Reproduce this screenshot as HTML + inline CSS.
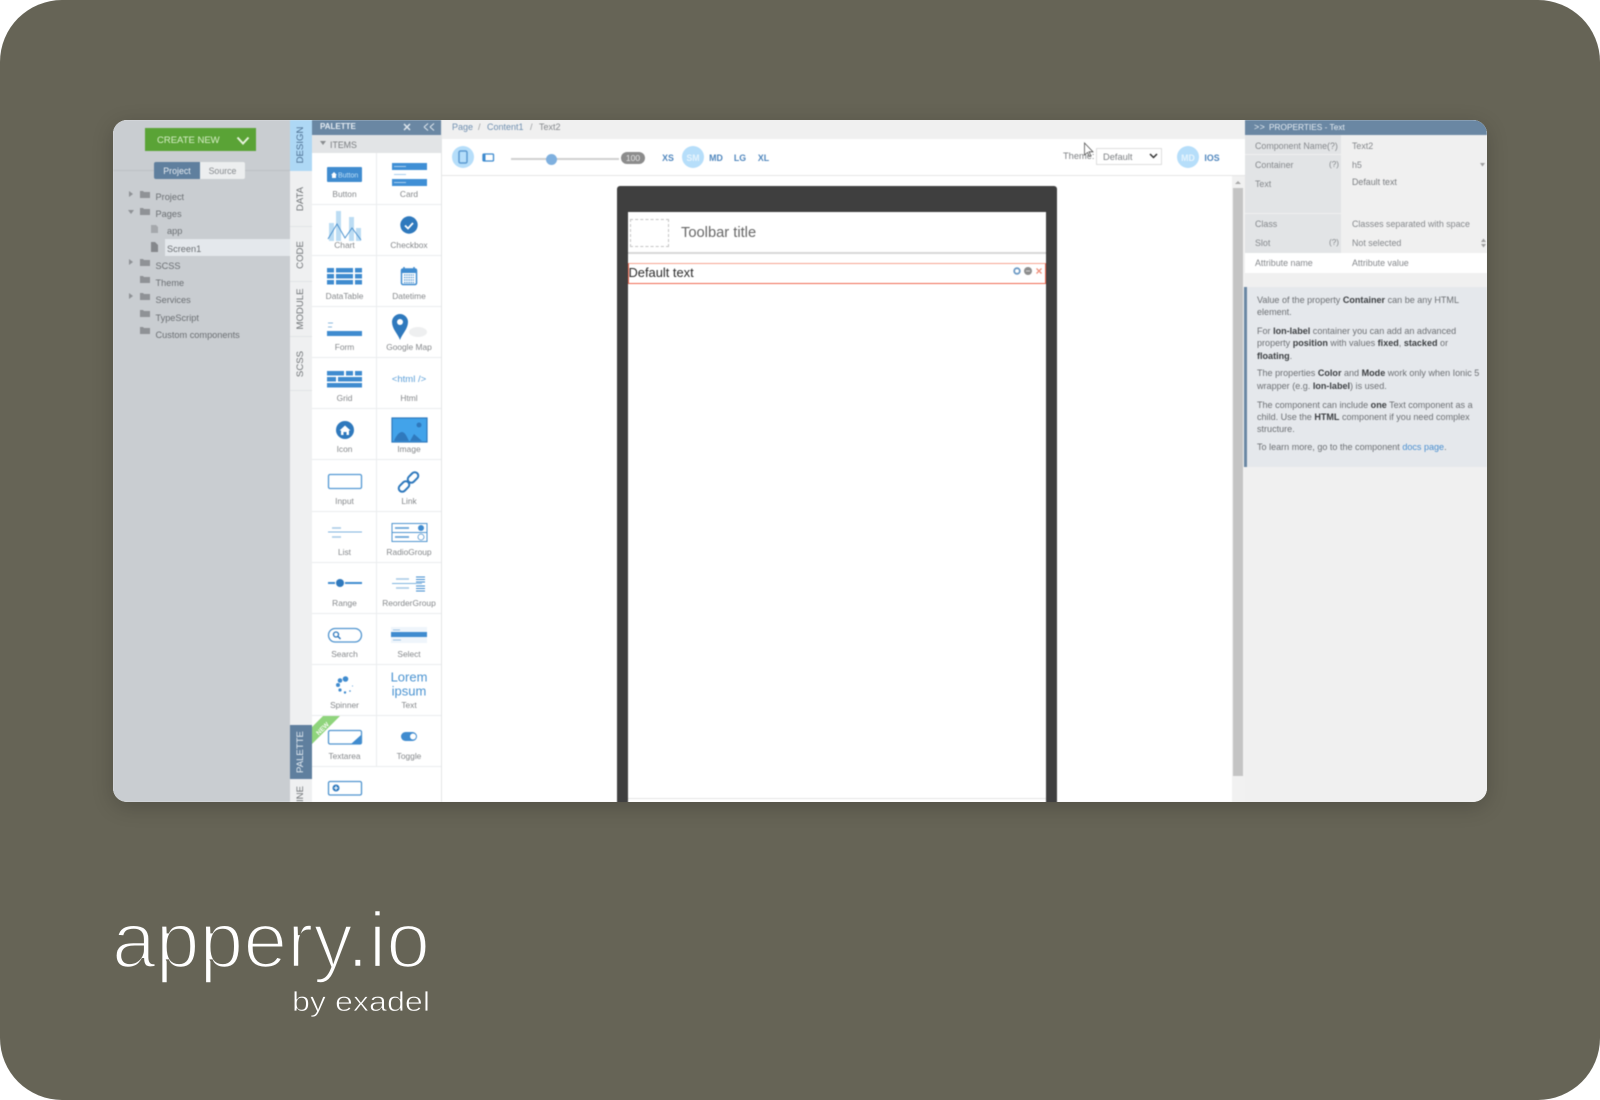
<!DOCTYPE html>
<html lang="en"><head><meta charset="utf-8"><title>appery.io</title>
<style>
html,body{margin:0;padding:0;width:1600px;height:1100px;background:#fff;overflow:hidden}
#bg{position:absolute;left:0;top:0;width:1600px;height:1100px;background:#666456;border-radius:62px;overflow:hidden}
.card{position:absolute;left:113px;top:120px;width:1374px;height:682px;border-radius:14px;overflow:hidden;background:#f0f0f0}
#in{position:absolute;left:-113px;top:-120px;width:1600px;height:1100px;filter:blur(.5px);font-family:"Liberation Sans",sans-serif}
#in div,#in svg{position:absolute}
.t{white-space:nowrap;line-height:12px;height:12px;font-size:9.2px;color:#6b6f73}
.c{text-align:center}
.pl{width:64px;text-align:center;white-space:nowrap;line-height:12px;height:12px;font-size:8.4px;color:#85888b}
.vt{white-space:nowrap;font-size:9.6px;color:#6e7275;line-height:12px;transform:rotate(-90deg);transform-origin:center;width:60px;height:12px;text-align:center}
.sz{font-weight:bold;font-size:9px;color:#4f86bd;line-height:12px;height:12px;width:24px;text-align:center}
.h{font-size:9.05px;color:#6d7074;white-space:nowrap;line-height:12px;height:12px}
.h b{color:#3c3f42}
</style></head><body>
<div id="bg">
<div class="card" style="box-shadow:0 5px 22px rgba(0,0,0,.2)"></div>
</div>
<div class="card">
<div id="in">
<!-- left -->
<div style="left:113px;top:120px;width:177px;height:682px;background:#c9cdd1"></div>
<div style="left:113px;top:170px;width:177px;height:1px;background:#bdc1c5"></div>
<div style="left:145px;top:128px;width:111px;height:23px;background:#5aa336"></div>
<div class="t" style="left:157px;top:133.500px;color:#d8efc8;font-size:9.500px;line-height:14px;height:14px">CREATE NEW</div>
<svg style="left:236px;top:135px" width="14" height="11" viewBox="0 0 14 11"><path d="M1.5 2.5 7 8.500 12.500 2.500" fill="none" stroke="#e6f3dc" stroke-width="2"/></svg>
<div style="left:154px;top:162px;width:46px;height:17px;background:#5f7f9e;border-radius:2px 0 0 2px"></div>
<div style="left:200px;top:162px;width:45px;height:17px;background:#eceeef;border-radius:0 2px 2px 0"></div>
<div class="t c" style="left:154px;top:164.500px;width:46px;color:#e8edf2;font-size:8.800px">Project</div>
<div class="t c" style="left:200px;top:164.500px;width:45px;color:#85898d;font-size:8.800px">Source</div>
<div style="left:165px;top:239px;width:125px;height:17px;background:#e4e8ec"></div>
<svg style="left:126px;top:186px" width="30" height="160" viewBox="0 0 30 160" fill="#8f9296">
<path d="M3 5l4 3-4 3z M3 73l4 3-4 3z M3 107l4 3-4 3z M2 24l6 0-3 4z"/>
<path d="M14 5h3l1 1h6v6h-10z M14 22h3l1 1h6v6h-10z M14 73h3l1 1h6v6h-10z M14 90h3l1 1h6v6h-10z M14 107h3l1 1h6v6h-10z M14 124h3l1 1h6v6h-10z M14 141h3l1 1h6v6h-10z"/>
</svg>
<svg style="left:150px;top:224px" width="10" height="30" viewBox="0 0 10 30" fill="#a5a8ac"><path d="M1 1h5l2 2v6h-7z"/><path d="M1 18h4l3 3v7h-7z" fill="#85888c"/></svg>
<div class="t" style="left:155.500px;top:190.500px">Project</div>
<div class="t" style="left:155.500px;top:207.500px">Pages</div>
<div class="t" style="left:167px;top:224.500px">app</div>
<div class="t" style="left:167px;top:242.500px">Screen1</div>
<div class="t" style="left:155.500px;top:259.500px">SCSS</div>
<div class="t" style="left:155.500px;top:276.500px">Theme</div>
<div class="t" style="left:155.500px;top:293.500px">Services</div>
<div class="t" style="left:155.500px;top:311.500px">TypeScript</div>
<div class="t" style="left:155.500px;top:328.500px">Custom components</div>
<!-- vertical tabs -->
<div style="left:290px;top:120px;width:22px;height:682px;background:#eff0f1"></div>
<div style="left:290px;top:120px;width:22px;height:51px;background:#aed8f5"></div>
<div style="left:290px;top:226px;width:22px;height:1px;background:#e2e4e6"></div>
<div style="left:290px;top:281px;width:22px;height:1px;background:#e2e4e6"></div>
<div style="left:290px;top:336px;width:22px;height:1px;background:#e2e4e6"></div>
<div style="left:290px;top:390px;width:22px;height:1px;background:#e2e4e6"></div>
<div class="vt" style="left:271px;top:139px;color:#4c6f92">DESIGN</div>
<div class="vt" style="left:271px;top:193px">DATA</div>
<div class="vt" style="left:271px;top:249px">CODE</div>
<div class="vt" style="left:271px;top:303px">MODULE</div>
<div class="vt" style="left:271px;top:358px">SCSS</div>
<div style="left:290px;top:725px;width:22px;height:54px;background:#5f7f9e"></div>
<div class="vt" style="left:271px;top:746px;color:#e6edf3">PALETTE</div>
<div class="vt" style="left:271px;top:810px;text-align:right">LINE</div>
<!-- palette -->
<div style="left:312px;top:120px;width:129px;height:682px;background:#fff"></div>
<div style="left:312px;top:120px;width:129px;height:15px;background:#6a87a3"></div>
<div class="t" style="left:320px;top:120.500px;color:#e6edf3;font-size:8px;font-weight:bold">PALETTE</div>
<svg style="left:402px;top:122px" width="34" height="11" viewBox="0 0 34 11" fill="none" stroke="#dfe7ee"><path d="M2 2l6 6M8 2l-6 6" stroke-width="1.500"/><path d="M22 5l4-3.500M22 5l4 3.500M28 5l4-3.500M28 5l4 3.500" stroke-width="1"/></svg>
<div style="left:312px;top:135px;width:129px;height:18px;background:#e2e4e6"></div>
<svg style="left:320px;top:141px" width="7" height="5"><path d="M0 0h6l-3 4z" fill="#8a8d90"/></svg>
<div class="t" style="left:330px;top:139px;font-size:8.800px;color:#7a7d80">ITEMS</div>
<div style="left:376px;top:153px;width:1px;height:613px;background:#ebedee"></div>
<div style="left:441px;top:120px;width:1px;height:682px;background:#e3e5e6"></div>
<div style="left:312px;top:204px;width:129px;height:1px;background:#ebedee"></div>
<div style="left:312px;top:255px;width:129px;height:1px;background:#ebedee"></div>
<div style="left:312px;top:306px;width:129px;height:1px;background:#ebedee"></div>
<div style="left:312px;top:357px;width:129px;height:1px;background:#ebedee"></div>
<div style="left:312px;top:408px;width:129px;height:1px;background:#ebedee"></div>
<div style="left:312px;top:459px;width:129px;height:1px;background:#ebedee"></div>
<div style="left:312px;top:511px;width:129px;height:1px;background:#ebedee"></div>
<div style="left:312px;top:562px;width:129px;height:1px;background:#ebedee"></div>
<div style="left:312px;top:613px;width:129px;height:1px;background:#ebedee"></div>
<div style="left:312px;top:664px;width:129px;height:1px;background:#ebedee"></div>
<div style="left:312px;top:715px;width:129px;height:1px;background:#ebedee"></div>
<div style="left:312px;top:766px;width:129px;height:1px;background:#ebedee"></div>
<div class="pl" style="left:312.500px;top:187.500px">Button</div><div class="pl" style="left:377px;top:187.500px">Card</div>
<div class="pl" style="left:312.500px;top:238.500px">Chart</div><div class="pl" style="left:377px;top:238.500px">Checkbox</div>
<div class="pl" style="left:312.500px;top:289.500px">DataTable</div><div class="pl" style="left:377px;top:289.500px">Datetime</div>
<div class="pl" style="left:312.500px;top:340.500px">Form</div><div class="pl" style="left:377px;top:340.500px">Google Map</div>
<div class="pl" style="left:312.500px;top:391.500px">Grid</div><div class="pl" style="left:377px;top:391.500px">Html</div>
<div class="pl" style="left:312.500px;top:442.500px">Icon</div><div class="pl" style="left:377px;top:442.500px">Image</div>
<div class="pl" style="left:312.500px;top:494.500px">Input</div><div class="pl" style="left:377px;top:494.500px">Link</div>
<div class="pl" style="left:312.500px;top:545.500px">List</div><div class="pl" style="left:377px;top:545.500px">RadioGroup</div>
<div class="pl" style="left:312.500px;top:596.500px">Range</div><div class="pl" style="left:377px;top:596.500px">ReorderGroup</div>
<div class="pl" style="left:312.500px;top:647.500px">Search</div><div class="pl" style="left:377px;top:647.500px">Select</div>
<div class="pl" style="left:312.500px;top:698.500px">Spinner</div><div class="pl" style="left:377px;top:698.500px">Text</div>
<div class="pl" style="left:312.500px;top:749.500px">Textarea</div><div class="pl" style="left:377px;top:749.500px">Toggle</div>
<svg style="left:312px;top:153px" width="129" height="649" viewBox="312 153 129 649">
<!-- button -->
<rect x="327" y="167" width="35" height="15" rx="1" fill="#3f8bcf"/>
<path d="M331 175l3-3 3 3h-1v3h-4v-3z" fill="#fff"/>
<text x="338" y="177.500" font-size="7" fill="#bfe0f7" font-family="Liberation Sans">Button</text>
<!-- card -->
<rect x="392" y="163" width="35" height="23" fill="#3f8fd5"/><rect x="392" y="170" width="35" height="9" fill="#fff"/>
<path d="M394 166.500h12M394 174.500h12M394 182.500h12" stroke="#a9cfee" stroke-width="1"/>
<!-- chart -->
<g fill="#bcdcf3"><rect x="329" y="223" width="5" height="18"/><rect x="336" y="211" width="5" height="30"/><rect x="349" y="217" width="5" height="24"/><rect x="356" y="228" width="5" height="13"/></g>
<path d="M328 239l9-15 8 14 7-10 9 12" fill="none" stroke="#4f94cf" stroke-width="1"/>
<!-- checkbox -->
<circle cx="409" cy="225" r="8.700" fill="#2f79bd"/><path d="M405 225.500l3 3 5-5.500" fill="none" stroke="#fff" stroke-width="1.800"/>
<!-- datatable -->
<g fill="#3f8bcf"><rect x="327" y="268" width="7" height="4.500"/><rect x="336" y="268" width="17" height="4.500"/><rect x="355" y="268" width="7" height="4.500"/><rect x="327" y="274" width="7" height="4.500"/><rect x="336" y="274" width="17" height="4.500"/><rect x="355" y="274" width="7" height="4.500"/><rect x="327" y="280" width="7" height="4.500"/><rect x="336" y="280" width="17" height="4.500"/><rect x="355" y="280" width="7" height="4.500"/></g>
<!-- datetime -->
<rect x="401.500" y="269" width="15" height="15.500" rx="1.500" fill="#fff" stroke="#3f8bcf" stroke-width="1.500"/><rect x="401" y="269" width="16" height="4" fill="#3f8bcf"/><path d="M404 267v3M414 267v3" stroke="#3f8bcf" stroke-width="1.500"/>
<path d="M404 275h10M404 277.500h10M404 280h10M404 282.500h10" stroke="#5a9bd4" stroke-width="1.200" stroke-dasharray="1.500 .7"/>
<!-- form -->
<rect x="327" y="331" width="35" height="5" fill="#3f8bcf"/><path d="M328 323h5M328 327h4" stroke="#8db9de"/>
<!-- map -->
<ellipse cx="418" cy="332" rx="9" ry="5" fill="#eeeff0"/>
<path d="M400 340c-2-6-8-11-8-18a8 8 0 0 1 16 0c0 7-6 12-8 18z" fill="#2f79bd"/><circle cx="400" cy="322" r="3" fill="#fff"/>
<!-- grid -->
<g fill="#3f8bcf"><rect x="327" y="371" width="17" height="4.500"/><rect x="346" y="371" width="7" height="4.500"/><rect x="355" y="371" width="7" height="4.500"/><rect x="327" y="377" width="9" height="4.500"/><rect x="338" y="377" width="24" height="4.500"/><rect x="327" y="383" width="35" height="4.500"/></g>
<text x="409" y="382" text-anchor="middle" font-size="9.500" fill="#5b9fd8" font-family="Liberation Sans">&lt;html /&gt;</text>
<!-- icon -->
<circle cx="345" cy="430" r="9" fill="#2f79bd"/><path d="M339.500 430.500l5.500-5 5.500 5h-1.500v4.500h-2.500v-3h-3v3h-2.500v-4.500z" fill="#fff"/>
<!-- image -->
<rect x="392" y="418" width="35" height="24" fill="#42a3ea"/><rect x="392" y="418" width="35" height="24" fill="none" stroke="#2f79bd" stroke-width="1.200"/>
<path d="M394 441c2-5 5-9 8-9s5 5 7 9z" fill="#2f79bd"/><path d="M410 441l4-7 8 7z" fill="#2f79bd"/><circle cx="419" cy="425" r="2.500" fill="#2f79bd"/>
<!-- input -->
<rect x="328.500" y="474.500" width="33" height="14" rx="1.500" fill="#fff" stroke="#5398d3" stroke-width="1.300"/>
<!-- link -->
<g fill="none" stroke="#2f79bd" stroke-width="2"><rect x="398" y="483" width="12" height="7" rx="3.500" transform="rotate(-45 404 486.500)"/><rect x="407" y="474" width="12" height="7" rx="3.500" transform="rotate(-45 413 477.500)"/></g>
<!-- list -->
<path d="M328 532h34" stroke="#7fb3de"/><path d="M332 528h9M332 537h9" stroke="#a6c9e6" stroke-width="1.500"/>
<!-- radio -->
<rect x="392" y="523.500" width="35" height="18" fill="#fff" stroke="#4f94cf"/><path d="M392 532.500h35" stroke="#4f94cf"/>
<path d="M395 528h14M395 537h14" stroke="#6aa5d8" stroke-width="1.800"/>
<circle cx="421" cy="528" r="3" fill="#3f8bcf"/><circle cx="421" cy="537" r="3" fill="none" stroke="#4f94cf" stroke-width=".8"/>
<!-- range -->
<path d="M328 583h7M345 583h17" stroke="#3f8bcf" stroke-width="2"/><circle cx="340" cy="583" r="4" fill="#2f79bd"/>
<!-- reorder -->
<path d="M392 583.500h30" stroke="#7fb3de"/><path d="M396 579h13M396 588h13" stroke="#a6c9e6" stroke-width="1.500"/>
<path d="M416 577h9M416 579.500h9M416 582h9M416 586h9M416 588.500h9M416 591h9" stroke="#3f8bcf"/>
<!-- search -->
<rect x="328.500" y="628.500" width="33" height="13.500" rx="6.700" fill="#fff" stroke="#4f94cf" stroke-width="1.300"/><circle cx="336" cy="634.500" r="2.500" fill="none" stroke="#2f79bd" stroke-width="1.300"/><path d="M338 636.500l2.500 2.500" stroke="#2f79bd" stroke-width="1.500"/>
<!-- select -->
<rect x="391" y="627" width="36" height="16" fill="#eff5fb"/><rect x="391" y="632" width="36" height="5" fill="#3f8bcf"/><path d="M393 630h7M393 640h8" stroke="#9dc3e4"/>
<!-- spinner -->
<g fill="#3f8bcf"><circle cx="345.500" cy="679" r="2.800"/><circle cx="340" cy="680.500" r="2.300"/><circle cx="338" cy="685" r="2"/><circle cx="340" cy="690" r="1.600"/><circle cx="345" cy="692.500" r="1.200"/><circle cx="350" cy="691" r=".8"/><circle cx="352.500" cy="686" r=".5"/></g>
<text x="409" y="681.500" text-anchor="middle" font-size="13" fill="#4a93d1" font-family="Liberation Sans">Lorem</text>
<text x="409" y="695.500" text-anchor="middle" font-size="13" fill="#4a93d1" font-family="Liberation Sans">ipsum</text>
<!-- textarea -->
<rect x="328.500" y="730.500" width="33" height="13.500" rx="1.500" fill="#fff" stroke="#4f94cf" stroke-width="1.300"/><path d="M361 735v9h-10z" fill="#3f8bcf"/>
<path d="M323 716h17l-28 28v-17z" fill="#8fd47c"/>
<text x="322" y="731" text-anchor="middle" font-size="6.500" font-weight="bold" fill="#f4fbf0" font-family="Liberation Sans" transform="rotate(-45 322 728)">NEW</text>
<!-- toggle -->
<rect x="401" y="732" width="16" height="9" rx="4.500" fill="#3f8bcf"/><circle cx="413" cy="736.500" r="3" fill="#fff"/>
<!-- last -->
<rect x="328.500" y="781.500" width="33" height="13.500" rx="1.500" fill="#fff" stroke="#4f94cf" stroke-width="1.300"/><circle cx="336" cy="788" r="3.500" fill="#2f79bd"/><path d="M334 788h4M336 786v4" stroke="#fff"/>
</svg>
<!-- center -->
<div style="left:442px;top:120px;width:803px;height:682px;background:#fff"></div>
<div style="left:442px;top:120px;width:803px;height:19px;background:#f0f0f0"></div>
<div style="left:442px;top:175px;width:803px;height:1px;background:#e6e6e6"></div>
<div class="t" style="left:452px;top:121px;font-size:9px;color:#6f8fb0">Page</div>
<div class="t" style="left:478px;top:121px;font-size:9px;color:#9a9da0">/</div>
<div class="t" style="left:487px;top:121px;font-size:9px;color:#6f8fb0">Content1</div>
<div class="t" style="left:530px;top:121px;font-size:9px;color:#9a9da0">/</div>
<div class="t" style="left:539px;top:121px;font-size:9px;color:#85888c">Text2</div>
<svg style="left:452px;top:146px" width="50" height="22" viewBox="452 146 50 22"><circle cx="463" cy="157" r="11" fill="#b6defa"/><rect x="459" y="151" width="8" height="12" rx="1.500" fill="none" stroke="#5d9bd2" stroke-width="1.500"/><rect x="483" y="154" width="10.500" height="7" rx="1" fill="#fff" stroke="#3f8bcf" stroke-width="1.300"/><rect x="482.500" y="154" width="3" height="7" fill="#3f8bcf"/></svg>
<div style="left:511px;top:158px;width:108px;height:2px;background:#d0d0d0"></div>
<div style="left:545.500px;top:153.500px;width:11px;height:11px;border-radius:50%;background:#7fb0df"></div>
<div style="left:621px;top:152px;width:24px;height:11.500px;border-radius:6px;background:#8c8c8c"></div>
<div class="t c" style="left:621px;top:152px;width:24px;font-size:8.500px;color:#e6e6e6">100</div>
<div class="sz" style="left:656px;top:151.500px;font-size:8.800px">XS</div>
<div style="left:682px;top:146px;width:22px;height:22px;border-radius:50%;background:#b6defa"></div>
<div class="sz" style="left:681px;top:151.500px;color:#e6f4fd;font-size:8.800px">SM</div>
<div class="sz" style="left:704px;top:151.500px;font-size:8.800px">MD</div>
<div class="sz" style="left:728px;top:151.500px;font-size:8.800px">LG</div>
<div class="sz" style="left:751.500px;top:151.500px;font-size:8.800px">XL</div>
<div class="t" style="left:1063px;top:150px;font-size:9.300px;color:#7c7f82">Theme:</div>
<div style="left:1096px;top:148px;width:64px;height:15px;border:1px solid #dedede;background:#fff"></div>
<div class="t" style="left:1103px;top:150.500px;font-size:9.300px;color:#7c7f82">Default</div>
<svg style="left:1149px;top:153px" width="9" height="6"><path d="M1 1l3.500 3.500 3.500-3.500" fill="none" stroke="#333" stroke-width="1.500"/></svg>
<svg style="left:1084px;top:142px" width="11" height="16" viewBox="0 0 11 16"><path d="M.5 1v12l3-2.500 2 4 1.500-.7-2-4h4z" fill="#fff" stroke="#555" stroke-width=".8"/></svg>
<div style="left:1177px;top:146px;width:22px;height:22px;border-radius:50%;background:#b6defa"></div>
<div class="sz" style="left:1176px;top:151.500px;color:#e6f4fd;font-size:8.800px">MD</div>
<div class="sz" style="left:1200px;top:151.500px;font-size:8.800px">IOS</div>
<!-- phone -->
<div style="left:617px;top:186px;width:440px;height:640px;background:#3f3f3f;border-radius:3px 3px 0 0"></div>
<div style="left:628px;top:212px;width:418px;height:600px;background:#fff"></div>
<div style="left:628px;top:252px;width:418px;height:1.500px;background:#d8d8d8"></div>
<div style="left:630px;top:219px;width:37px;height:26px;border:1px dashed #c4c4c4"></div>
<div class="t" style="left:681px;top:224.500px;height:17px;line-height:17px;font-size:14.700px;color:#666">Toolbar title</div>
<div style="left:628px;top:263px;width:416px;height:18.500px;border:1px solid #ef6a52;border-top:1.500px solid #f6a592"></div>
<div class="t" style="left:628.500px;top:265px;height:15px;line-height:15px;font-size:12.900px;color:#2c2c2c">Default text</div>
<svg style="left:1011px;top:265px" width="34" height="12" viewBox="1011 265 34 12"><circle cx="1017" cy="271" r="2.800" fill="none" stroke="#6f9cc6" stroke-width="1.800"/><circle cx="1028" cy="271" r="4" fill="#8e8e8e"/><path d="M1026 271h4" stroke="#cfcfcf"/><path d="M1036.500 268.500l5 5M1041.500 268.500l-5 5" stroke="#f0917c" stroke-width="1.300"/></svg>
<div style="left:628px;top:798px;width:418px;height:1px;background:#e4e4e4"></div>
<!-- scrollbar -->
<div style="left:1232px;top:176px;width:13px;height:626px;background:#f1f1f1"></div>
<div style="left:1233px;top:188px;width:10px;height:588px;background:#c4c4c4"></div>
<svg style="left:1235px;top:180px" width="6" height="4"><path d="M0 4l3-3 3 3z" fill="#a8a8a8"/></svg>
<!-- properties -->
<div style="left:1245px;top:120px;width:242px;height:682px;background:#f0f0f0"></div>
<div style="left:1245px;top:120px;width:242px;height:15px;background:#6a87a3"></div>
<div class="t" style="left:1254px;top:120.500px;font-size:8.900px;color:#e6edf3"><span style="letter-spacing:.5px">&gt;&gt;</span></div>
<div class="t" style="left:1269px;top:120.500px;font-size:8.300px;color:#e6edf3">PROPERTIES - Text</div>
<div style="left:1245px;top:135px;width:96px;height:19px;background:#e2e4e6"></div>
<div style="left:1245px;top:155px;width:96px;height:18.500px;background:#e2e4e6"></div>
<div style="left:1245px;top:174px;width:96px;height:39px;background:#e2e4e6"></div>
<div style="left:1245px;top:214px;width:96px;height:18.500px;background:#e2e4e6"></div>
<div style="left:1245px;top:233px;width:96px;height:19.500px;background:#e2e4e6"></div>
<div style="left:1245px;top:253px;width:242px;height:19.500px;background:#fff"></div>
<div class="t" style="left:1255px;top:139.500px;color:#85888c;font-size:8.900px">Component Name(?)</div>
<div class="t" style="left:1352px;top:139.500px;color:#85888c;font-size:8.900px">Text2</div>
<div class="t" style="left:1255px;top:159px;color:#85888c;font-size:8.900px">Container</div>
<div class="t" style="left:1329px;top:159px;color:#85888c;font-size:8.200px">(?)</div>
<div class="t" style="left:1352px;top:159px;color:#85888c;font-size:8.900px">h5</div>
<svg style="left:1480px;top:163px" width="6" height="4"><path d="M0 0h5l-2.500 3.500z" fill="#a0a0a0"/></svg>
<div class="t" style="left:1255px;top:178px;color:#85888c;font-size:8.900px">Text</div>
<div class="t" style="left:1352px;top:176px;color:#7a7d80;font-size:8.900px">Default text</div>
<div class="t" style="left:1255px;top:217.500px;color:#85888c;font-size:8.900px">Class</div>
<div class="t" style="left:1352px;top:217.500px;color:#85888c;font-size:8.900px">Classes separated with space</div>
<div class="t" style="left:1255px;top:237px;color:#85888c;font-size:8.900px">Slot</div>
<div class="t" style="left:1329px;top:237px;color:#85888c;font-size:8.200px">(?)</div>
<div class="t" style="left:1352px;top:237px;color:#85888c;font-size:8.900px">Not selected</div>
<svg style="left:1481px;top:238px" width="5" height="10"><path d="M0 4l2.500-3.500L5 4zM0 6l2.500 3.500L5 6z" fill="#a0a0a0"/></svg>
<div class="t" style="left:1255px;top:257px;color:#85888c;font-size:8.900px">Attribute name</div>
<div class="t" style="left:1352px;top:257px;color:#85888c;font-size:8.900px">Attribute value</div>
<div style="left:1244px;top:287px;width:243px;height:180px;background:#e5e8ec"></div>
<div style="left:1244px;top:287px;width:3px;height:180px;background:#6a87a3"></div>
<div class="h" style="left:1257px;top:294px">Value of the property <b>Container</b> can be any HTML</div>
<div class="h" style="left:1257px;top:306px">element.</div>
<div class="h" style="left:1257px;top:325px">For <b>Ion-label</b> container you can add an advanced</div>
<div class="h" style="left:1257px;top:337px">property <b>position</b> with values <b>fixed</b>, <b>stacked</b> or</div>
<div class="h" style="left:1257px;top:350px"><b>floating</b>.</div>
<div class="h" style="left:1257px;top:367px">The properties <b>Color</b> and <b>Mode</b> work only when Ionic 5</div>
<div class="h" style="left:1257px;top:380px">wrapper (e.g. <b>Ion-label</b>) is used.</div>
<div class="h" style="left:1257px;top:399px">The component can include <b>one</b> Text component as a</div>
<div class="h" style="left:1257px;top:411px">child. Use the <b>HTML</b> component if you need complex</div>
<div class="h" style="left:1257px;top:423px">structure.</div>
<div class="h" style="left:1257px;top:441px">To learn more, go to the component <span style="color:#4a8fd0">docs page</span>.</div>
</div>
</div>
<svg style="position:absolute;left:0;top:0" width="1600" height="1100" viewBox="0 0 1600 1100">
<text x="112" y="967" font-family="Liberation Sans" font-size="79" fill="#fff" stroke="#666456" stroke-width="2.600" textLength="318" lengthAdjust="spacingAndGlyphs">appery.io</text>
<text x="292" y="1011" font-family="Liberation Sans" font-size="28" fill="#fff" stroke="#666456" stroke-width=".7" textLength="138" lengthAdjust="spacingAndGlyphs">by exadel</text>
</svg>
</body></html>
